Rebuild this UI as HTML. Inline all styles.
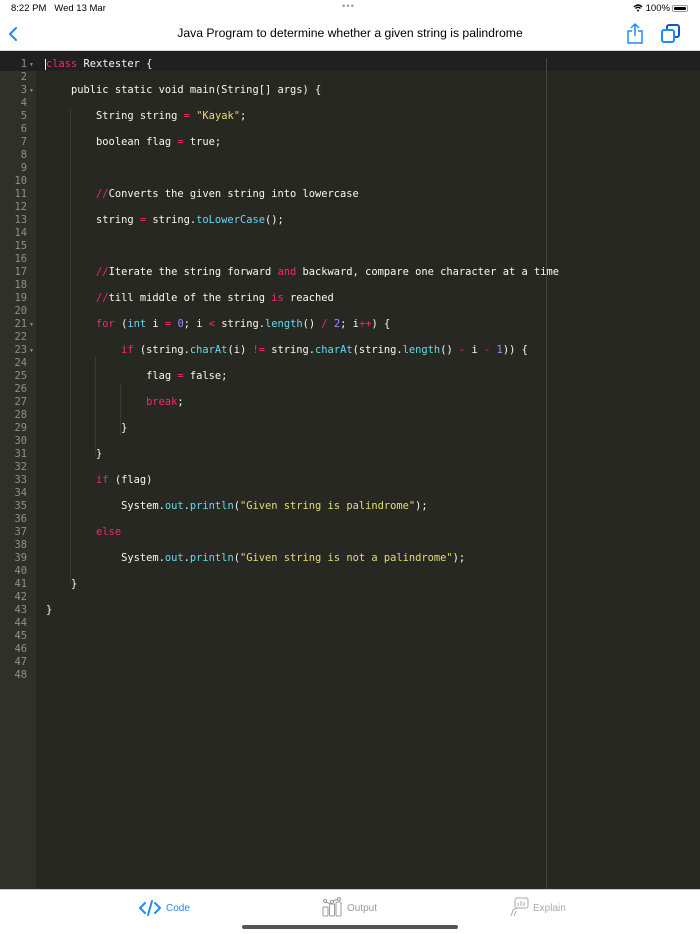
<!DOCTYPE html>
<html><head><meta charset="utf-8"><style>
*{margin:0;padding:0;box-sizing:border-box}
body{width:700px;height:934px;overflow:hidden;background:#fff;font-family:"Liberation Sans",sans-serif;position:relative}
.status{position:absolute;top:3px;font-size:9.5px;color:#000}
.nav{position:absolute;top:0;left:0;width:700px;height:51px;border-bottom:1px solid #d8d8d8}
.title{position:absolute;top:26px;left:0;width:700px;text-align:center;font-size:12.2px;color:#000}
.editor{position:absolute;top:51px;left:0;width:700px;height:838px;background:#272822}
.gutter{position:absolute;top:0;left:0;width:36px;height:838px;background:#2f3129}
.topstrip{position:absolute;top:0;left:0;width:700px;height:7px;background:#202020}
.active{position:absolute;top:7px;left:0;width:700px;height:13px;background:#202020}
.nums{position:absolute;top:7px;left:0;width:27px;text-align:right;font:10.4px/13px "DejaVu Sans Mono",monospace;color:#8f908a}
.fold{position:absolute;left:29px;font-size:5px;color:#8f908a}
.code{position:absolute;top:7px;left:46px;font:10.4px/13px "DejaVu Sans Mono",monospace;color:#f8f8f2;white-space:pre}
.k{color:#f92672}.s{color:#e6db74}.f{color:#66d9ef}.n{color:#ae81ff}
.margin{position:absolute;top:7px;left:546px;width:1px;height:831px;background:#464741}
.guide{position:absolute;width:1px;background:#3a3b35}
.tab{position:absolute;top:889px;left:0;width:700px;height:45px;background:#fff;border-top:1px solid #ccc}
.tl{position:absolute;top:13px;font-size:10px}
</style></head><body>
<div class="nav">
<div class="status" style="left:11px">8:22 PM&nbsp;&nbsp;&nbsp;Wed 13 Mar</div>
<div class="status" style="left:342px;color:#999;top:1px;letter-spacing:1px">•••</div>
<div class="status" style="left:633px">
<svg width="10" height="8" viewBox="0 0 10 8" style="vertical-align:-1px"><path d="M1 3Q5 -1 9 3M2.5 4.5Q5 2 7.5 4.5" stroke="#000" stroke-width="1.3" fill="none"/><circle cx="5" cy="6.5" r="1" fill="#000"/></svg> 100%</div>
<div style="position:absolute;left:672px;top:5px;width:16px;height:7px;border:1px solid #999;border-radius:2px;padding:1px"><div style="width:100%;height:100%;background:#000;border-radius:1px"></div></div>
<svg style="position:absolute;left:8px;top:26px" width="10" height="16"><path d="M8 2L2 8L8 14" stroke="#1a8cff" stroke-width="2" fill="none" stroke-linecap="round" stroke-linejoin="round"/></svg>
<div class="title">Java Program to determine whether a given string is palindrome</div>
<svg style="position:absolute;left:626px;top:22px" width="18" height="22"><path d="M6 9H2V21H16V9H12M9 14V2M5 6L9 2L13 6" stroke="#1a8cff" stroke-width="1.5" fill="none"/></svg>
<svg style="position:absolute;left:660px;top:23px" width="22" height="22"><rect x="7" y="2" width="12" height="12" rx="2" stroke="#1456c8" stroke-width="2" fill="none"/><rect x="2" y="7" width="12" height="12" rx="2" stroke="#1a8cff" stroke-width="2" fill="#fff"/></svg>
</div>
<div class="editor">
<div class="gutter"></div>
<div class="topstrip"></div>
<div class="active"></div>
<div class="margin"></div>
<div class="guide" style="left:70px;top:59px;height:473px"></div>
<div class="guide" style="left:95px;top:306px;height:98px"></div>
<div class="guide" style="left:120px;top:332px;height:52px"></div>
<div class="nums">1<br>2<br>3<br>4<br>5<br>6<br>7<br>8<br>9<br>10<br>11<br>12<br>13<br>14<br>15<br>16<br>17<br>18<br>19<br>20<br>21<br>22<br>23<br>24<br>25<br>26<br>27<br>28<br>29<br>30<br>31<br>32<br>33<br>34<br>35<br>36<br>37<br>38<br>39<br>40<br>41<br>42<br>43<br>44<br>45<br>46<br>47<br>48</div>
<div class="fold" style="top:11px">▼</div>
<div class="fold" style="top:37px">▼</div>
<div class="fold" style="top:271px">▼</div>
<div class="fold" style="top:297px">▼</div>
<div style="position:absolute;left:45px;top:8px;width:1px;height:11px;background:#f8f8f0"></div>
<div class="code"><span class="k">class</span> Rextester {

    public static void main(String[] args) {

        String string <span class="k">=</span> <span class="s">"Kayak"</span>;

        boolean flag <span class="k">=</span> true;



        <span class="k">//</span>Converts the given string into lowercase

        string <span class="k">=</span> string.<span class="f">toLowerCase</span>();



        <span class="k">//</span>Iterate the string forward <span class="k">and</span> backward, compare one character at a time

        <span class="k">//</span>till middle of the string <span class="k">is</span> reached

        <span class="k">for</span> (<span class="f">int</span> i <span class="k">=</span> <span class="n">0</span>; i <span class="k">&lt;</span> string.<span class="f">length</span>() <span class="k">/</span> <span class="n">2</span>; i<span class="k">++</span>) {

            <span class="k">if</span> (string.<span class="f">charAt</span>(i) <span class="k">!=</span> string.<span class="f">charAt</span>(string.<span class="f">length</span>() <span class="k">-</span> i <span class="k">-</span> <span class="n">1</span>)) {

                flag <span class="k">=</span> false;

                <span class="k">break</span>;

            }

        }

        <span class="k">if</span> (flag)

            System.<span class="f">out</span>.<span class="f">println</span>(<span class="s">"Given string is palindrome"</span>);

        <span class="k">else</span>

            System.<span class="f">out</span>.<span class="f">println</span>(<span class="s">"Given string is not a palindrome"</span>);

    }

}</div>
</div>
<div class="tab">
<svg style="position:absolute;left:138px;top:10px" width="24" height="16"><path d="M7 3L2 8L7 13M17 3L22 8L17 13M14 1L10 15" stroke="#1a8cff" stroke-width="2" fill="none" stroke-linecap="round" stroke-linejoin="round"/></svg>
<div class="tl" style="left:166px;color:#1a8cff">Code</div>
<svg style="position:absolute;left:322px;top:7px" width="20" height="20" fill="none" stroke="#999" stroke-width="1"><rect x="1" y="10" width="5" height="9" rx="1"/><rect x="7.5" y="7" width="5" height="12" rx="1"/><rect x="14" y="5" width="5" height="14" rx="1"/><circle cx="3" cy="4" r="1.5"/><circle cx="10" cy="5" r="1.5"/><circle cx="17" cy="2" r="1.5"/><path d="M4 5L9 7M11 4L16 2"/></svg>
<div class="tl" style="left:347px;color:#999">Output</div>
<svg style="position:absolute;left:509px;top:7px" width="20" height="20" fill="none" stroke="#aaa" stroke-width="1"><rect x="6" y="1" width="13" height="10" rx="2"/><path d="M9 9V6M12 9V4M15 9V5M2 19L4 13L8 11M5 19L7 14"/></svg>
<div class="tl" style="left:533px;color:#aaa">Explain</div>
<div style="position:absolute;left:242px;top:35px;width:216px;height:4px;border-radius:2px;background:#555"></div>
</div>
</body></html>
